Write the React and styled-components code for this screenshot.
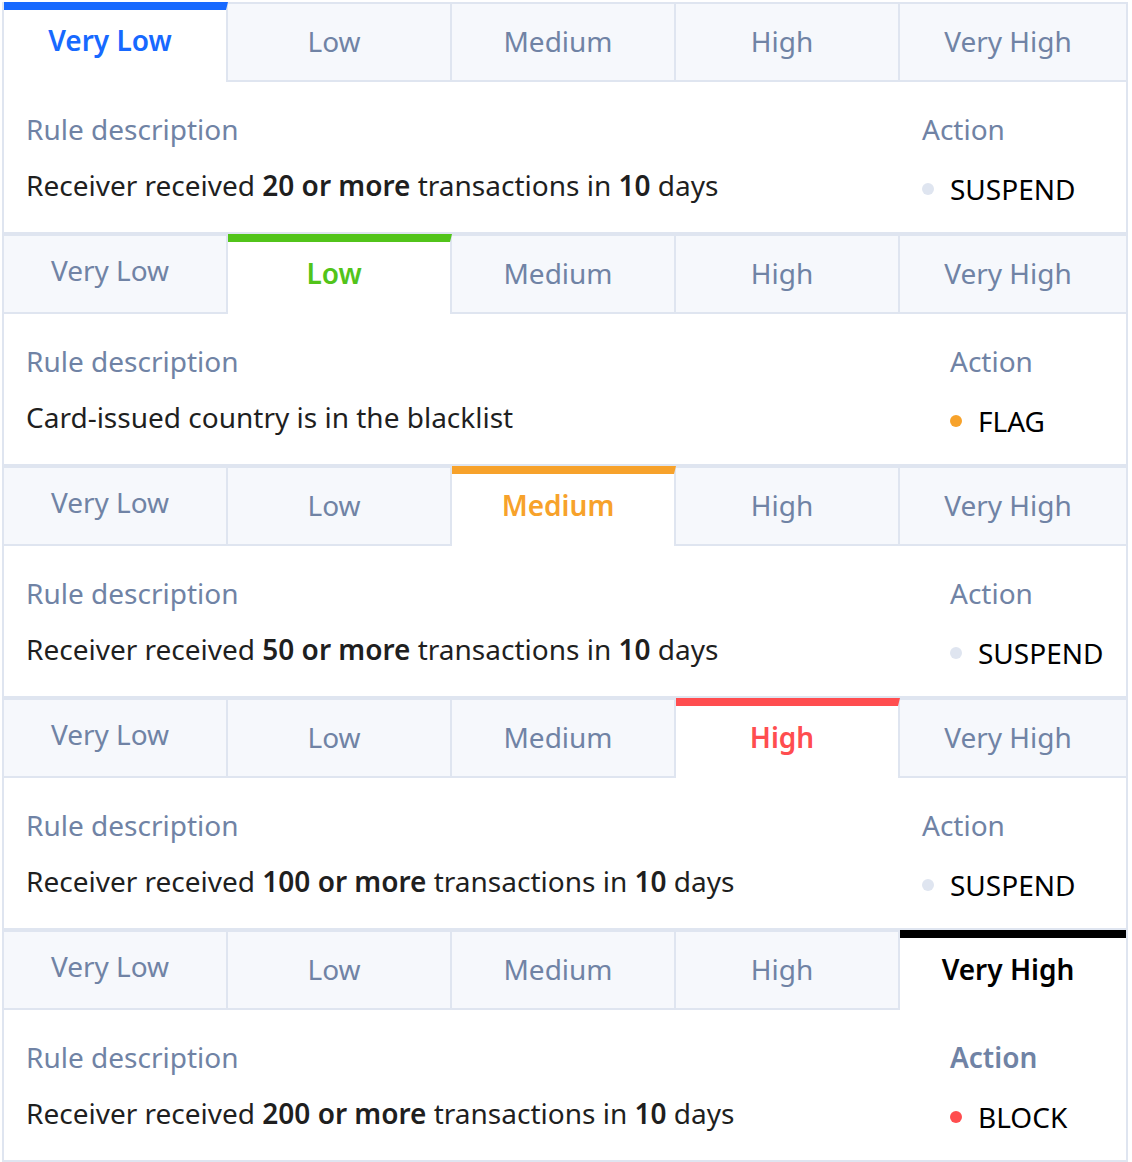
import React from "react";
import styled, { createGlobalStyle, css } from "styled-components";

const LEVELS = ["Very Low", "Low", "Medium", "High", "Very High"];

const ACCENTS = ["#1769ff", "#52c41a", "#f7a22b", "#ff4d4f", "#000000"];

const RULES = [
  {
    desc: (
      <>
        Receiver received <b>20 or more</b> transactions in <b>10</b> days
      </>
    ),
    action: "SUSPEND",
    dot: "#dfe5f0",
    actionWidth: 204,
  },
  {
    desc: <>Card-issued country is in the blacklist</>,
    action: "FLAG",
    dot: "#f7a22b",
    actionWidth: 176,
  },
  {
    desc: (
      <>
        Receiver received <b>50 or more</b> transactions in <b>10</b> days
      </>
    ),
    action: "SUSPEND",
    dot: "#dfe5f0",
    actionWidth: 176,
  },
  {
    desc: (
      <>
        Receiver received <b>100 or more</b> transactions in <b>10</b> days
      </>
    ),
    action: "SUSPEND",
    dot: "#dfe5f0",
    actionWidth: 204,
  },
  {
    desc: (
      <>
        Receiver received <b>200 or more</b> transactions in <b>10</b> days
      </>
    ),
    action: "BLOCK",
    dot: "#ff4d4f",
    actionWidth: 176,
    boldLabel: true,
  },
];

function App() {
  return (
    <>
      <GlobalStyle />
      <Wrapper>
        {RULES.map((rule, i) => (
          <Block key={i}>
            <TabRow>
              {LEVELS.map((level, j) => (
                <Tab key={level} $active={i === j} $first={j === 0} $accent={ACCENTS[j]}>
                  {level}
                </Tab>
              ))}
            </TabRow>
            <Content>
              <Column>
                <Label>Rule description</Label>
                <Description>{rule.desc}</Description>
              </Column>
              <ActionColumn $width={rule.actionWidth}>
                <Label $bold={rule.boldLabel}>Action</Label>
                <ActionValue>
                  <Dot $color={rule.dot} />
                  {rule.action}
                </ActionValue>
              </ActionColumn>
            </Content>
          </Block>
        ))}
      </Wrapper>
    </>
  );
}

export default App;

const GlobalStyle = createGlobalStyle`
  body {
    margin: 0;
    background: #fff;
    font-family: "Noto Sans", "Open Sans", sans-serif;
  }
`;

const Wrapper = styled.div`
  width: 1126px;
  padding: 2px;
`;

const Block = styled.div`
  border: 2px solid #dfe5f0;
  border-top: none;
  background: #fff;
`;

const TabRow = styled.div`
  display: flex;
  height: 80px;
`;

const Tab = styled.div`
  flex: 0 0 224px;
  box-sizing: border-box;
  height: 80px;
  display: flex;
  align-items: center;
  justify-content: center;
  font-size: 28px;
  background: #f6f8fc;
  color: #7083a5;
  border-top: 2px solid #dfe5f0;
  border-bottom: 2px solid #dfe5f0;
  border-right: 2px solid #dfe5f0;
  padding-right: 10px;
  padding-bottom: ${(p) => (p.$first ? "9px" : "2px")};

  &:last-child {
    flex: 1;
    border-right: none;
  }

  ${(p) =>
    p.$active &&
    css`
      background: #fff;
      color: ${p.$accent};
      font-weight: 600;
      border-top: 8px solid ${p.$accent};
      border-bottom: none;
      padding-bottom: ${p.$first ? "12px" : "10px"};
    `}
`;

const Content = styled.div`
  display: flex;
  height: 150px;
  box-sizing: border-box;
  padding: 29px 0 0 22px;
`;

const Column = styled.div`
  flex: 1;
`;

const ActionColumn = styled.div`
  width: ${(p) => p.$width}px;
`;

const Label = styled.div`
  font-size: 28px;
  line-height: 36px;
  color: #7083a5;
  font-weight: ${(p) => (p.$bold ? 600 : 400)};
`;

const Description = styled.div`
  margin-top: 20px;
  font-size: 28px;
  line-height: 36px;
  color: #1f1f1f;

  b {
    font-weight: 600;
  }
`;

const ActionValue = styled.div`
  margin-top: 24px;
  display: flex;
  align-items: center;
  gap: 16px;
  font-size: 28px;
  line-height: 36px;
  color: #000;
`;

const Dot = styled.span`
  width: 12px;
  height: 12px;
  border-radius: 50%;
  background: ${(p) => p.$color};
`;
